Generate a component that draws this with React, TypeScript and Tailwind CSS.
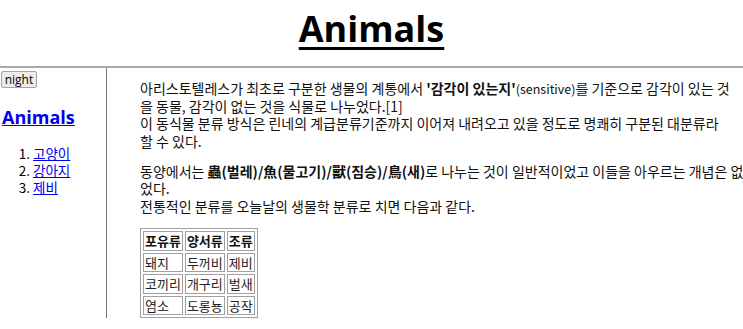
import React from "react";

const ko = { fontFamily: '"Noto Sans CJK KR", "Noto Sans", sans-serif' };
const latin = { fontFamily: '"Open Sans", "Noto Sans", sans-serif' };

const animals = ["고양이", "강아지", "제비"];

const rows = [
  ["돼지", "두꺼비", "제비"],
  ["코끼리", "개구리", "벌새"],
  ["염소", "도롱뇽", "공작"],
];

export default function App() {
  return (
    <div className="w-[743px] overflow-hidden bg-white text-black" style={ko}>
      {/* title */}
      <h1 className="h-[68px] border-b-2 border-[#a8a8a8] pt-[4px] text-center">
        <a
          href="#"
          className="text-[36px] font-bold leading-[49px] text-black underline decoration-[3px] underline-offset-[5px]"
          style={latin}
        >
          Animals
        </a>
      </h1>

      <div className="grid grid-cols-[107px_1fr]">
        {/* side nav */}
        <div className="border-r border-[#777] pt-[3px]">
          <button
            className="ml-[1px] block h-[17px] w-[36px] rounded-[2px] border border-[#a3a3a3] bg-[#ededed] text-[12px] leading-none text-black"
            style={latin}
          >
            night
          </button>
          <h2 className="mt-[17px] pl-[2px] text-[18px] font-bold leading-[24px]" style={latin}>
            <a href="#" className="text-[#0000ee] underline">
              Animals
            </a>
          </h2>
          <ol className="mt-[16px] list-decimal pl-[33px] text-[13.5px] leading-[17px]">
            {animals.map((a) => (
              <li key={a}>
                <a href="#" className="text-[#0000ee] underline">
                  {a}
                </a>
              </li>
            ))}
          </ol>
        </div>

        {/* article */}
        <div className="whitespace-nowrap pl-[33px] pt-[12px] text-[14px] leading-[17.5px] text-[#111]">
          <p>
            아리스토텔레스가 최초로 구분한 생물의 계통에서 <b>'감각이 있는지'</b>
            <span className="text-[12.5px]">(sensitive)</span>를 기준으로 감각이 있는 것
            <br />
            을 동물, 감각이 없는 것을 식물로 나누었다.[1]
            <br />
            이 동식물 분류 방식은 린네의 계급분류기준까지 이어져 내려오고 있을 정도로 명쾌히 구분된 대분류라
            <br />할 수 있다.
          </p>
          <p className="mt-[12.5px]">
            동양에서는 <b>蟲(벌레)/魚(물고기)/獸(짐승)/鳥(새)</b>로 나누는 것이 일반적이었고 이들을 아우르는 개념은 없
            <br />
            었다.
            <br />
            전통적인 분류를 오늘날의 생물학 분류로 치면 다음과 같다.
          </p>

          <table className="mt-[13px] border-separate border-spacing-[2px] border border-[#a0a0a0] text-[13px] leading-[17.5px]">
            <thead>
              <tr>
                {["포유류", "양서류", "조류"].map((h) => (
                  <th key={h} className="border border-[#a0a0a0] px-px text-left font-bold">
                    {h}
                  </th>
                ))}
              </tr>
            </thead>
            <tbody>
              {rows.map((r, i) => (
                <tr key={i}>
                  {r.map((c) => (
                    <td key={c} className="border border-[#a0a0a0] px-px text-[#222]">
                      {c}
                    </td>
                  ))}
                </tr>
              ))}
            </tbody>
          </table>
        </div>
      </div>
    </div>
  );
}
